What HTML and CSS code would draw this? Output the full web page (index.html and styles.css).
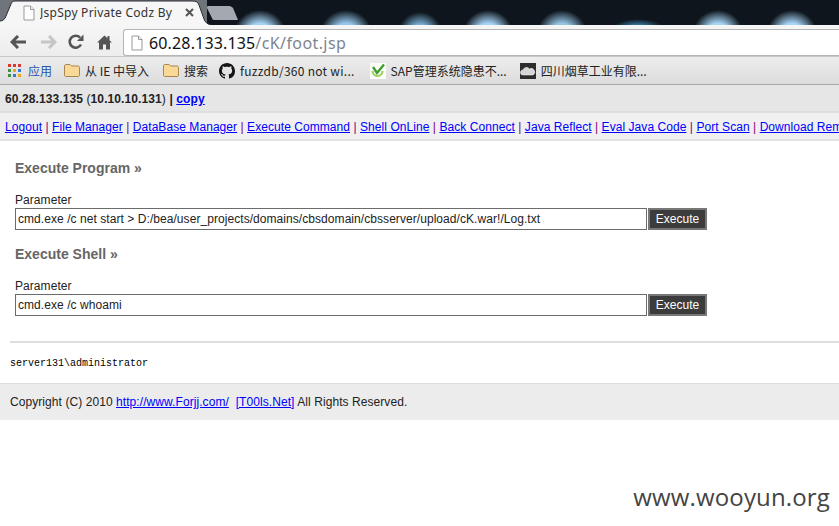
FILE: index.html
```html
<!DOCTYPE html>
<html lang="zh">
<head>
<meta charset="utf-8">
<title>JspSpy Private Codz By</title>
<link rel="stylesheet" href="styles.css">
</head>
<body>
<div class="tabstrip">
  <div class="tab">
    <svg class="tab-shape" width="212" height="25" viewBox="0 0 212 25"><path d="M0 25V21C3 21 5 19 6 16L11 4C12 1 14 1 17 1H192C196 1 198 2 199 5L204 19C205 22 207 24 211 25Z" fill="#f6f6f6"/><path d="M0 21C3 21 5 19 6 16L11 4C12 1 14 1 17 1H192C196 1 198 2 199 5L204 19C205 22 207 24 211 25" fill="none" stroke="#2a2e33"/></svg>
    <svg class="tab-page" width="12" height="16" viewBox="0 0 12 16"><path d="M1 1H7.500L11 4.500V15H1Z" fill="#fff" stroke="#999"/><path d="M7.500 1V4.500H11" fill="#eee" stroke="#999"/></svg>
    <span class="tab-title">JspSpy Private Codz By</span>
    <svg class="tab-close" width="9" height="9" viewBox="0 0 9 9"><path d="M1 1L8 8M8 1L1 8" stroke="#555" stroke-width="2"/></svg>
  </div>
  <svg class="newtab" width="32" height="16" viewBox="0 0 32 16"><path d="M1 0H22C24 0 25 1 26 2L31 14H7C6 14 5 13 5 12L0 2C0 1 0 0 1 0Z" fill="#a4a9b1"/></svg>
</div>
<div class="toolbar">
  <svg class="nav-back" width="18" height="14" viewBox="0 0 18 14"><path d="M8 1L2 7L8 13M2 7H16" fill="none" stroke="#555" stroke-width="3"/></svg>
  <svg class="nav-fwd" width="18" height="14" viewBox="0 0 18 14"><path d="M10 1L16 7L10 13M16 7H2" fill="none" stroke="#c6c6c6" stroke-width="3"/></svg>
  <svg class="nav-reload" width="16" height="16" viewBox="0 0 16 16"><path d="M13 10.500A6 6 0 1 1 12 3.500" fill="none" stroke="#555" stroke-width="2.600"/><path d="M9 7H15.500V0.500Z" fill="#555"/></svg>
  <svg class="nav-home" width="15" height="15" viewBox="0 0 15 15"><path d="M7.500 0.500L0 7.500H2V14.500H6V9.500H9V14.500H13V7.500H15L12.500 5.200V1H10.500V3.300Z" fill="#555"/></svg>
  <div class="omnibox">
    <svg class="omni-page" width="12" height="16" viewBox="0 0 12 16"><path d="M1 1H7.500L11 4.500V15H1Z" fill="#fff" stroke="#999"/><path d="M7.500 1V4.500H11" fill="#eee" stroke="#999"/></svg>
    <span class="host">60.28.133.135</span><span class="path">/cK/foot.jsp</span>
  </div>
</div>
<div class="bookmarks">
  <span class="bm bm-apps">
    <svg width="13" height="13" viewBox="0 0 13 13">
      <rect x="0" y="0" width="3" height="3" fill="#d83b2d"/><rect x="5" y="0" width="3" height="3" fill="#d83b2d"/><rect x="10" y="0" width="3" height="3" fill="#d83b2d"/>
      <rect x="0" y="5" width="3" height="3" fill="#3c8f46"/><rect x="5" y="5" width="3" height="3" fill="#e9a91c"/><rect x="10" y="5" width="3" height="3" fill="#3a78d8"/>
      <rect x="0" y="10" width="3" height="3" fill="#3c8f46"/><rect x="5" y="10" width="3" height="3" fill="#3a78d8"/><rect x="10" y="10" width="3" height="3" fill="#e9a91c"/>
    </svg>
    <span class="bm-apps-label">应用</span>
  </span>
  <span class="bm bm-ie">
    <svg width="16" height="13" viewBox="0 0 16 13"><path d="M0.500 11V2C0.500 1 1 0.500 2 0.500H6L7.500 2H14C15 2 15.500 2.500 15.500 3.500V11C15.500 12 15 12.500 14 12.500H2C1 12.500 0.500 12 0.500 11Z" fill="#f8d998" stroke="#a9854f"/></svg>
    从 IE 中导入
  </span>
  <span class="bm bm-search">
    <svg width="16" height="13" viewBox="0 0 16 13"><path d="M0.500 11V2C0.500 1 1 0.500 2 0.500H6L7.500 2H14C15 2 15.500 2.500 15.500 3.500V11C15.500 12 15 12.500 14 12.500H2C1 12.500 0.500 12 0.500 11Z" fill="#f8d998" stroke="#a9854f"/></svg>
    搜索
  </span>
  <span class="bm bm-git">
    <svg width="16" height="16" viewBox="0 0 16 16"><path fill="#161614" d="M8 0C3.580 0 0 3.580 0 8c0 3.540 2.290 6.530 5.470 7.590.4.070.55-.17.55-.38 0-.19-.01-.82-.01-1.490-2.010.37-2.530-.49-2.690-.94-.09-.23-.48-.94-.82-1.130-.28-.15-.68-.52-.01-.53.63-.01 1.080.58 1.230.82.720 1.210 1.870.87 2.330.66.070-.52.280-.87.510-1.070-1.780-.2-3.640-.89-3.640-3.950 0-.87.310-1.590.820-2.150-.08-.2-.36-1.020.08-2.120 0 0 .67-.21 2.200.82.640-.18 1.320-.27 2-.27s1.360.09 2 .27c1.530-1.040 2.200-.82 2.200-.82.440 1.100.16 1.920.08 2.120.51.560.82 1.270.82 2.150 0 3.070-1.870 3.750-3.650 3.950.29.250.54.730.54 1.480 0 1.070-.01 1.930-.01 2.200 0 .21.150.46.550.38A8.013 8.013 0 0016 8c0-4.420-3.580-8-8-8z"/></svg>
    <span class="git-label">fuzzdb/360 not wi...</span>
  </span>
  <span class="bm bm-sap">
    <svg width="16" height="16" viewBox="0 0 16 16"><rect width="16" height="16" fill="#fbfdf8"/><path d="M2.500 8A5 5 0 1 0 12.500 8" fill="none" stroke="#9ccc5a" stroke-width="2.200"/><path d="M3 4L7 10L14 1.500" fill="none" stroke="#3f9e2f" stroke-width="2.400"/></svg>
    SAP管理系统隐患不...
  </span>
  <span class="bm bm-cloud">
    <svg width="16" height="16" viewBox="0 0 16 16"><rect width="16" height="16" fill="#2d2d2d"/><path d="M3 12A2.500 2.500 0 0 1 3 7C4 4 8 3.500 9.500 6A3 3 0 0 1 13 12Z" fill="#d6d6d6" stroke="#fff" stroke-width="0.500"/></svg>
    四川烟草工业有限...
  </span>
</div>
<div class="page">
  <div class="info"><b>60.28.133.135</b> (<b>10.10.10.131</b>) <b>| <a href="#">copy</a></b></div>
  <div class="nav"><a href="#">Logout</a> | <a href="#">File Manager</a> | <a href="#">DataBase Manager</a> | <a href="#">Execute Command</a> | <a href="#">Shell OnLine</a> | <a href="#">Back Connect</a> | <a href="#">Java Reflect</a> | <a href="#">Eval Java Code</a> | <a href="#">Port Scan</a> | <a href="#">Download Remote File</a></div>
  <div class="panel">
    <h2>Execute Program »</h2>
    <p class="label">Parameter</p>
    <div class="row"><input class="field" type="text" value="cmd.exe /c net start > D:/bea/user_projects/domains/cbsdomain/cbsserver/upload/cK.war!/Log.txt"><button class="exec" type="button">Execute</button></div>
    <h2 class="second">Execute Shell »</h2>
    <p class="label">Parameter</p>
    <div class="row"><input class="field" type="text" value="cmd.exe /c whoami"><button class="exec" type="button">Execute</button></div>
  </div>
  <hr class="rule">
  <pre class="output">server131\administrator</pre>
  <div class="foot">Copyright (C) 2010 <a href="#">http://www.Forjj.com/</a>&nbsp; <a href="#">[T00ls.Net]</a> All Rights Reserved.</div>
</div>
<div class="mark">www.wooyun.org</div>
</body>
</html>
```
FILE: styles.css
```css
html, body { margin: 0; padding: 0; height: 526px; overflow: hidden; background: #fff; }
body { position: relative; width: 839px; font: 12px "Liberation Sans", Arial, sans-serif; color: #222; }
svg { display: block; flex: none; }

.tabstrip {
  height: 25px; display: flex; align-items: flex-start; box-sizing: border-box;
  background-color: #0e151c;
  background-image:
    radial-gradient(ellipse 26px 24px at 260px 34px, #a4d2f4 45%, transparent 100%),
    radial-gradient(ellipse 26px 24px at 346px 34px, #94c6ea 45%, transparent 100%),
    radial-gradient(ellipse 22px 22px at 420px 34px, #7fb8df 40%, transparent 100%),
    radial-gradient(ellipse 25px 24px at 488px 34px, #a4d2f4 45%, transparent 100%),
    radial-gradient(ellipse 25px 24px at 562px 34px, #94c2e2 45%, transparent 100%),
    radial-gradient(ellipse 26px 10px at 638px 29px, #3a7ea8 35%, transparent 100%),
    radial-gradient(ellipse 25px 24px at 718px 34px, #a6d4f6 45%, transparent 100%),
    radial-gradient(ellipse 25px 24px at 792px 34px, #a6d4f6 45%, transparent 100%);
}
.tab { position: relative; width: 207px; height: 25px; display: flex; align-items: center; background: #70757c; }
.tab-shape { position: absolute; left: 0; top: 0; }
.tab-page { position: relative; margin: 0 0 0 23px; }
.tab-title { position: relative; margin-left: 5px; width: 133px; overflow: hidden; white-space: nowrap; font: 12px "Noto Sans", sans-serif; color: #333; letter-spacing: 0.250px; }
.tab-close { position: relative; margin-left: 12px; }
.newtab { margin: 6px 0 0 0; }

.toolbar { height: 31px; box-sizing: border-box; display: flex; align-items: center; padding: 3px 0 0 10px; background: linear-gradient(#f6f6f6, #ededed); }
.nav-back, .nav-fwd { margin-right: 11px; }
.nav-reload { margin-right: 13px; }
.nav-home { margin-right: 11px; }
.omnibox {
  flex: 1; height: 27px; align-self: flex-end; box-sizing: border-box; display: flex; align-items: center;
  background: #fff; border: 1px solid #b5b5b5; border-right: 0; border-radius: 3px 0 0 3px; padding-left: 7px;
  font: 16px "Noto Sans", "Open Sans", sans-serif; white-space: nowrap; letter-spacing: 0.150px;
}
.omni-page { margin-right: 6px; }
.host { color: #111; }
.path { color: #7d8590; letter-spacing: 0.400px; }

.bookmarks { height: 29px; box-sizing: border-box; display: flex; align-items: center; padding-left: 8px; background: linear-gradient(#ededed, #dcdcdc); border-top: 1px solid #c8c8c8; border-bottom: 1px solid #a8a8a8; font: 12px "Noto Sans CJK SC", "Noto Sans", sans-serif; color: #222; white-space: nowrap; }
.bm { display: flex; align-items: center; gap: 5px; }
.bm-apps { gap: 7px; }
.bm-apps-label { color: #2a55b0; }
.git-label { letter-spacing: 0.270px; }
.bm-ie { margin-left: 12px; }
.bm-search { margin-left: 14px; }
.bm-git { margin-left: 11px; }
.bm-sap { margin-left: 15px; }
.bm-cloud { margin-left: 13px; }

.page { white-space: nowrap; overflow: hidden; letter-spacing: 0.060px; }
.page a { color: #00f; }
.info { height: 26px; line-height: 28px; padding-left: 5px; background: #e6e6e6; border-bottom: 2px solid #dedede; letter-spacing: 0.100px; }
.nav { height: 26px; line-height: 28px; padding-left: 5px; background: #f0f0f0; border-bottom: 2px solid #e2e2e2; color: #800080; }
.panel { padding: 19px 0 0 15px; }
h2 { margin: 0 0 16px; font-size: 14px; line-height: 16px; font-weight: bold; color: #666; letter-spacing: 0; }
h2.second { margin-top: 16px; }
.label { margin: 0; line-height: 16px; color: #222; }
.row { display: flex; }
.field { width: 632px; height: 22px; box-sizing: border-box; margin: 0; padding: 0 2px; border: 1px solid #6b6b6b; font: 12px "Liberation Sans", Arial, sans-serif; letter-spacing: 0.060px; color: #222; background: #fff; outline: 0; }
.exec { width: 59px; height: 22px; box-sizing: border-box; margin: 0 0 0 1px; padding: 0; border: 2px solid #777; background: #3c3c3c; color: #fff; font: 12px "Liberation Sans", Arial, sans-serif; }
.rule { height: 2px; margin: 25px 0 0 10px; border: 0; background: #dedede; }
.output { margin: 13px 0 0 10px; font: 10px/16px "Liberation Mono", monospace; color: #000; letter-spacing: 0; }
.foot { margin-top: 11px; height: 36px; line-height: 37px; padding-left: 10px; background: #ececec; border-top: 1px solid #dedede; color: #222; letter-spacing: 0.070px; }

.mark { position: absolute; right: 9px; top: 480px; font: 24px "Open Sans", sans-serif; color: #444; letter-spacing: 0.150px; }
```
